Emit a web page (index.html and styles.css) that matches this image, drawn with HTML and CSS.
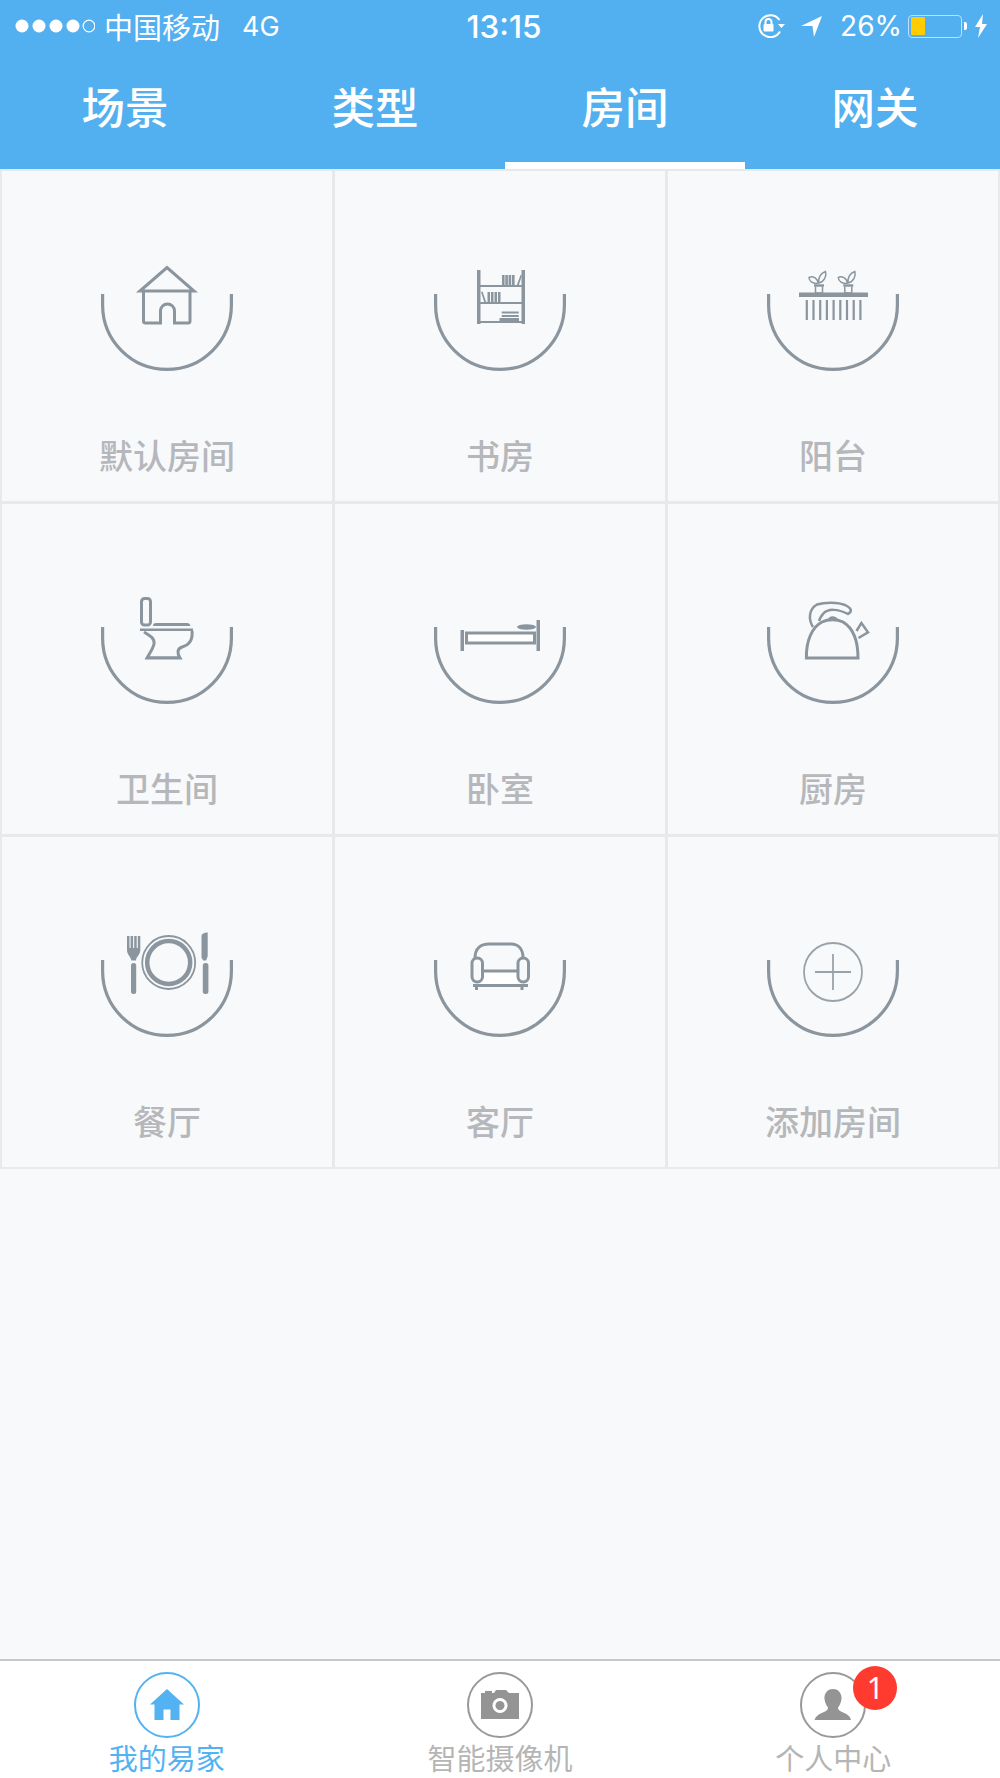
FILE: index.html
```html
<!DOCTYPE html>
<html lang="zh">
<head>
<meta charset="utf-8">
<title>我的易家</title>
<link rel="stylesheet" href="styles.css">
</head>
<body>
<svg class="defs" width="0" height="0" aria-hidden="true">
  <symbol id="arc" viewBox="0 0 160 135"><path d="M15.600 54V65a64.400 64.400 0 0 0 128.800 0V54"/></symbol>
  <g id="plant">
    <path class="solid" d="M61 44.300h10v2.400H61z"/>
    <path class="leaf" d="M62.500 46.500v6.500h7v-6.500M65.500 43C63.500 37 59.500 36 56 37.500 56 41 60 44.500 65.500 43ZM65.500 43C65.500 37 68 33 72.500 31.500 74 36 71 42 65.500 43Z"/>
  </g>
</svg>
<div class="app">
  <header class="header">
    <div class="status">
      <div class="status-left">
        <svg class="signal" width="80" height="14" viewBox="0 0 80 14">
          <circle cx="7" cy="7" r="6.500" class="w"/><circle cx="24" cy="7" r="6.500" class="w"/><circle cx="41" cy="7" r="6.500" class="w"/><circle cx="58" cy="7" r="6.500" class="w"/><circle cx="74" cy="7" r="5.800" class="o"/>
        </svg>
        <span class="carrier">中国移动</span>
        <span class="net">4G</span>
      </div>
      <div class="time">13:15</div>
      <div class="status-right">
        <svg class="lock" width="30" height="24" viewBox="0 0 30 24">
          <path d="M24 17.500A11 11 0 1 1 23.500 6" class="ol"/>
          <path d="M22 10h7l-3.500 4z" class="w"/>
          <rect x="7.500" y="10" width="10" height="7.500" rx="1" class="w"/>
          <path d="M9.500 10V8a3 3 0 0 1 6 0v2" class="ol"/>
        </svg>
        <svg class="arrow" width="22" height="22" viewBox="0 0 22 22"><path d="M0 11 21 1 13 22 11.500 11z" class="w"/></svg>
        <span class="pct">26%</span>
        <div class="battery"><div class="battery-fill"></div></div>
        <div class="battery-tip"></div>
        <svg class="bolt" width="14" height="24" viewBox="0 0 14 24"><path d="M9 0 1 13h5L4 24l9-14H8z" class="w"/></svg>
      </div>
    </div>
    <nav class="tabs">
      <div class="tab"><span>场景</span></div>
      <div class="tab"><span>类型</span></div>
      <div class="tab active"><span>房间</span></div>
      <div class="tab"><span>网关</span></div>
    </nav>
  </header>

  <main class="grid">
    <div class="cell">
      <svg class="room" viewBox="0 0 160 135"><use href="#arc" class="arc"/>
        <g class="line"><path d="M53 51 80 27.500 107 51ZM56.500 51V81a2 2 0 0 0 2 2H73.500V71a7 7 0 0 1 14 0V83H101a2 2 0 0 0 2-2V51"/></g>
      </svg>
      <span class="label">默认房间</span>
    </div>
    <div class="cell">
      <svg class="room" viewBox="0 0 160 135"><use href="#arc" class="arc"/>
        <g class="line thin"><path d="M60 46H102M60 63H102M60 82H102"/></g>
        <g class="solid">
          <rect x="57" y="30" width="3.500" height="54"/><rect x="101.500" y="30" width="3.500" height="54"/>
          <path d="M82 35h2.600v11H82zM85.300 35h2.600v11h-2.600zM88.600 35h2.600v11h-2.600zM92 35h2.600v11H92zM96.500 46l4-11 1.500.5-3.500 10.500zM61 52l1.500-.5 4 11.500h-2zM67.500 52h2.500v11h-2.500zM71 52h2.500v11H71zM74.500 52h2.500v11h-2.500zM78 52h2.500v11H78zM81.700 71.500h17v2H81.700zM81.700 75h17v2H81.700zM79.500 78h19.500v3.500H79.500z"/>
        </g>
      </svg>
      <span class="label">书房</span>
    </div>
    <div class="cell">
      <svg class="room" viewBox="0 0 160 135"><use href="#arc" class="arc"/>
        <g class="solid"><rect x="46" y="52.500" width="69" height="4.500"/>
          <path d="M52.700 60h2.200v20h-2.200zM59.400 60h2.200v20h-2.200zM66.100 60h2.200v20h-2.200zM72.800 60h2.200v20H72.800zM79.500 60h2.200v20h-2.200zM86.200 60h2.200v20h-2.200zM92.900 60h2.200v20h-2.200zM99.600 60h2.200v20h-2.200zM106.300 60h2.200v20h-2.200z"/></g>
        <use href="#plant"/><use href="#plant" x="29.300"/>
      </svg>
      <span class="label">阳台</span>
    </div>

    <div class="cell">
      <svg class="room" viewBox="0 0 160 135"><use href="#arc" class="arc"/>
        <g class="line"><rect x="54.500" y="25.500" width="9" height="26.500" rx="3"/>
          <path d="M57 59C62 62 68 65 67 71 66 76 62 81 60 85H93C90 80 90 76 95 74 102 72 106 67 105 58"/></g>
        <g class="solid"><path d="M66 53c0-2 1-3 3-3H100c2 0 3 1 3.500 3zM53 55.500h53v2.500H53zM59 83.500H94v2.500H59z"/></g>
      </svg>
      <span class="label">卫生间</span>
    </div>
    <div class="cell">
      <svg class="room" viewBox="0 0 160 135"><use href="#arc" class="arc"/>
        <rect x="46.500" y="60" width="68" height="10" class="bed"/>
        <g class="solid"><rect x="40.500" y="57" width="3.500" height="21"/><rect x="116.500" y="47" width="3.500" height="31"/><ellipse cx="106.500" cy="54" rx="9.500" ry="2.800"/></g>
      </svg>
      <span class="label">卧室</span>
    </div>
    <div class="cell">
      <svg class="room" viewBox="0 0 160 135"><use href="#arc" class="arc"/>
        <g class="line"><path d="M53.400 85H105C105 68 100 55 90 49 84 46 75 46 69 49 59 54 53 68 53.400 85Z"/>
          <path d="M103.500 58 108.400 50 115 59.400 105.500 65" class="thinner"/>
          <path d="M60 54C55 46 56 36 64 31.500 72 29 85 29 92 32 98 35 100 38 95 41 85 36 75 35 70 41 68 43 67 45 66 48" class="thinner"/></g>
        <path class="solid" d="M75 47c0-5 9-5 10 0z"/>
      </svg>
      <span class="label">厨房</span>
    </div>

    <div class="cell">
      <svg class="room" viewBox="0 0 160 135"><use href="#arc" class="arc"/>
        <circle cx="81.700" cy="56.500" r="26.500" class="plate-o"/><circle cx="81.700" cy="56.500" r="21.500" class="plate-i"/>
        <g class="solid">
          <path d="M40 30h2.500v14H40zM43.600 30h2.500v14h-2.500zM47.200 30h2.500v14h-2.500zM50.800 30h2.500v14h-2.500zM40 42H53.300V44C53.300 49 49 51 49 54.500H44.200C44.200 51 40 49 40 44Z"/>
          <rect x="44" y="57" width="5.200" height="31" rx="2.500"/>
          <path d="M114.500 30c0-2 3-3.500 6.200-3.500V50l-1.500 4.500h-3l-1.700-3z"/>
          <rect x="115.800" y="57" width="5.600" height="31" rx="2.500"/>
        </g>
      </svg>
      <span class="label">餐厅</span>
    </div>
    <div class="cell">
      <svg class="room" viewBox="0 0 160 135"><use href="#arc" class="arc"/>
        <rect x="60" y="66" width="40" height="13" class="seat"/>
        <g class="line"><path d="M55 52C55 42 61 38 69 38H91C99 38 103 44 103 52"/>
          <rect x="52" y="52" width="10.500" height="24" rx="5.200"/><rect x="98" y="52" width="10.500" height="24" rx="5.200"/>
          <path d="M62.500 65H98M53 79.500H108M56.500 80V84M102 80V84"/></g>
      </svg>
      <span class="label">客厅</span>
    </div>
    <div class="cell">
      <svg class="room" viewBox="0 0 160 135"><use href="#arc" class="arc"/>
        <g class="add"><circle cx="80" cy="66" r="29"/><path d="M80 48V84M62 66H98"/></g>
      </svg>
      <span class="label">添加房间</span>
    </div>
  </main>

  <div class="spacer"></div>

  <footer class="tabbar">
    <div class="bar-item on">
      <div class="ring"><svg width="38" height="34" viewBox="0 0 38 34"><path class="fill" d="M19 1 36 16.500H31.500V32H22.500V21.500H15.500V32H6.500V16.500H2Z"/></svg></div>
      <span class="bar-label">我的易家</span>
    </div>
    <div class="bar-item">
      <div class="ring"><svg width="38" height="30" viewBox="0 0 38 30"><path class="fill" fill-rule="evenodd" d="M0 3H4V1H11V3H13L15 0H25L28 3H38V29H0ZM19 8a7.500 7.500 0 1 0 .01 0ZM19 11a4.500 4.500 0 1 1-.01 0Z"/></svg></div>
      <span class="bar-label">智能摄像机</span>
    </div>
    <div class="bar-item">
      <div class="ring"><svg width="38" height="32" viewBox="0 0 38 32"><path class="fill" d="M19 0C25 0 28 5 27.500 10 27 14 25.500 16.500 24 18.500 24 20.500 25 21.500 28 23 33 25 36 27 37 31H0.500C2 27 5 25 10 23 13 21.500 14 20.500 14 18.500 12.500 16.500 11 14 10.500 10 10 5 13 0 19 0Z"/></svg>
        <span class="badge">1</span>
      </div>
      <span class="bar-label">个人中心</span>
    </div>
  </footer>
</div>
</body>
</html>
```
FILE: styles.css
```css
* { box-sizing: border-box; }
html, body { margin: 0; padding: 0; }
body { font-family: "Noto Sans CJK SC", "Noto Sans", sans-serif; background: #f8f9fb; }
.defs { display: block; height: 0; }
.app { width: 1000px; height: 1778px; display: flex; flex-direction: column; overflow: hidden; }

.header { height: 169px; background: #53b0f0; color: #fff; display: flex; flex-direction: column; flex: none; }
.status { height: 50px; display: grid; grid-template-columns: 1fr auto 1fr; align-items: center; padding: 2px 12px 0 15px; flex: none; }
.status-left, .status-right { display: flex; align-items: center; }
.status-right { justify-content: flex-end; }
.w { fill: #fff; }
.o { fill: none; stroke: #fff; stroke-width: 1.200; }
.ol { fill: none; stroke: #fff; stroke-width: 2; }
.signal { margin-right: 9px; }
.carrier { font-size: 29px; line-height: 40px; font-weight: 400; }
.net { font-family: Inter, "Liberation Sans", sans-serif; font-size: 27px; margin-left: 22px; font-weight: 400; }
.time { font-family: Inter, "Liberation Sans", sans-serif; font-size: 31.500px; font-weight: 500; padding-left: 5px; }
.lock { margin-right: 15px; }
.arrow { margin-right: 17px; }
.pct { font-family: Inter, "Liberation Sans", sans-serif; font-size: 28px; font-weight: 400; margin-right: 6px; }
.battery { width: 54px; height: 23px; border: 1.500px solid #bfe0f8; border-radius: 4px; padding: 1.500px; }
.battery-fill { width: 14px; height: 100%; background: #ffcc00; border-radius: 1px; }
.battery-tip { width: 3px; height: 8px; background: #fff; margin: 0 7px 0 2px; border-radius: 0 2px 2px 0; }

.tabs { display: flex; flex: 1; }
.tab { width: 250px; display: flex; flex-direction: column; align-items: center; }
.tab span { flex: 1; display: flex; align-items: center; font-size: 43.500px; font-weight: 500; line-height: 1; }
.tab::after { content: ""; display: block; width: 240px; height: 7px; }
.tab.active::after { background: #fff; }

.grid { display: grid; grid-template-columns: repeat(3, 1fr); grid-auto-rows: 330px; gap: 3px; padding: 2px; background: #e8e9eb; flex: none; }
.cell { display: flex; flex-direction: column; align-items: center; background: #f8f9fb; padding-top: 69px; }
.room { width: 160px; height: 135px; display: block; flex: none; }
.arc { fill: none; stroke: #8a959e; stroke-width: 3.200; }
.line { fill: none; stroke: #8a959e; stroke-width: 3; }
.line.thin { stroke-width: 2; }
.line .thinner { stroke-width: 2.500; }
.solid { fill: #8a959e; }
.leaf { fill: none; stroke: #8a959e; stroke-width: 1.500; }
.bed { fill: #fff; stroke: #8a959e; stroke-width: 3; }
.seat { fill: #fff; }
.add { fill: none; stroke: #9aa2a9; stroke-width: 1.800; }
.plate-o { fill: none; stroke: #8a959e; stroke-width: 1.800; }
.plate-i { fill: none; stroke: #8a959e; stroke-width: 4.500; }
.label { font-size: 34px; line-height: 46px; color: #b5b7ba; margin-top: 57px; font-weight: 500; }

.spacer { flex: 1; }
.tabbar { height: 119px; flex: none; background: #fff; border-top: 2px solid #c6c7c9; display: flex; }
.bar-item { flex: 1; display: flex; flex-direction: column; align-items: center; padding-top: 11px; }
.ring { position: relative; width: 66px; height: 66px; border: 2px solid #999; border-radius: 50%; display: flex; align-items: center; justify-content: center; flex: none; }
.fill { fill: #949494; }
.bar-item.on .ring { border-color: #52b2f2; }
.bar-item.on .fill { fill: #52b2f2; }
.bar-label { font-size: 29px; line-height: 38px; color: #b5b5b5; margin-top: 0; font-weight: 400; }
.bar-item.on .bar-label { color: #52b2f2; }
.badge { position: absolute; left: 51px; top: -8px; width: 44px; height: 44px; border-radius: 50%; background: #ff3b30; color: #fff; font-family: "Noto Sans", sans-serif; font-size: 30px; line-height: 44px; text-align: center; }
```
